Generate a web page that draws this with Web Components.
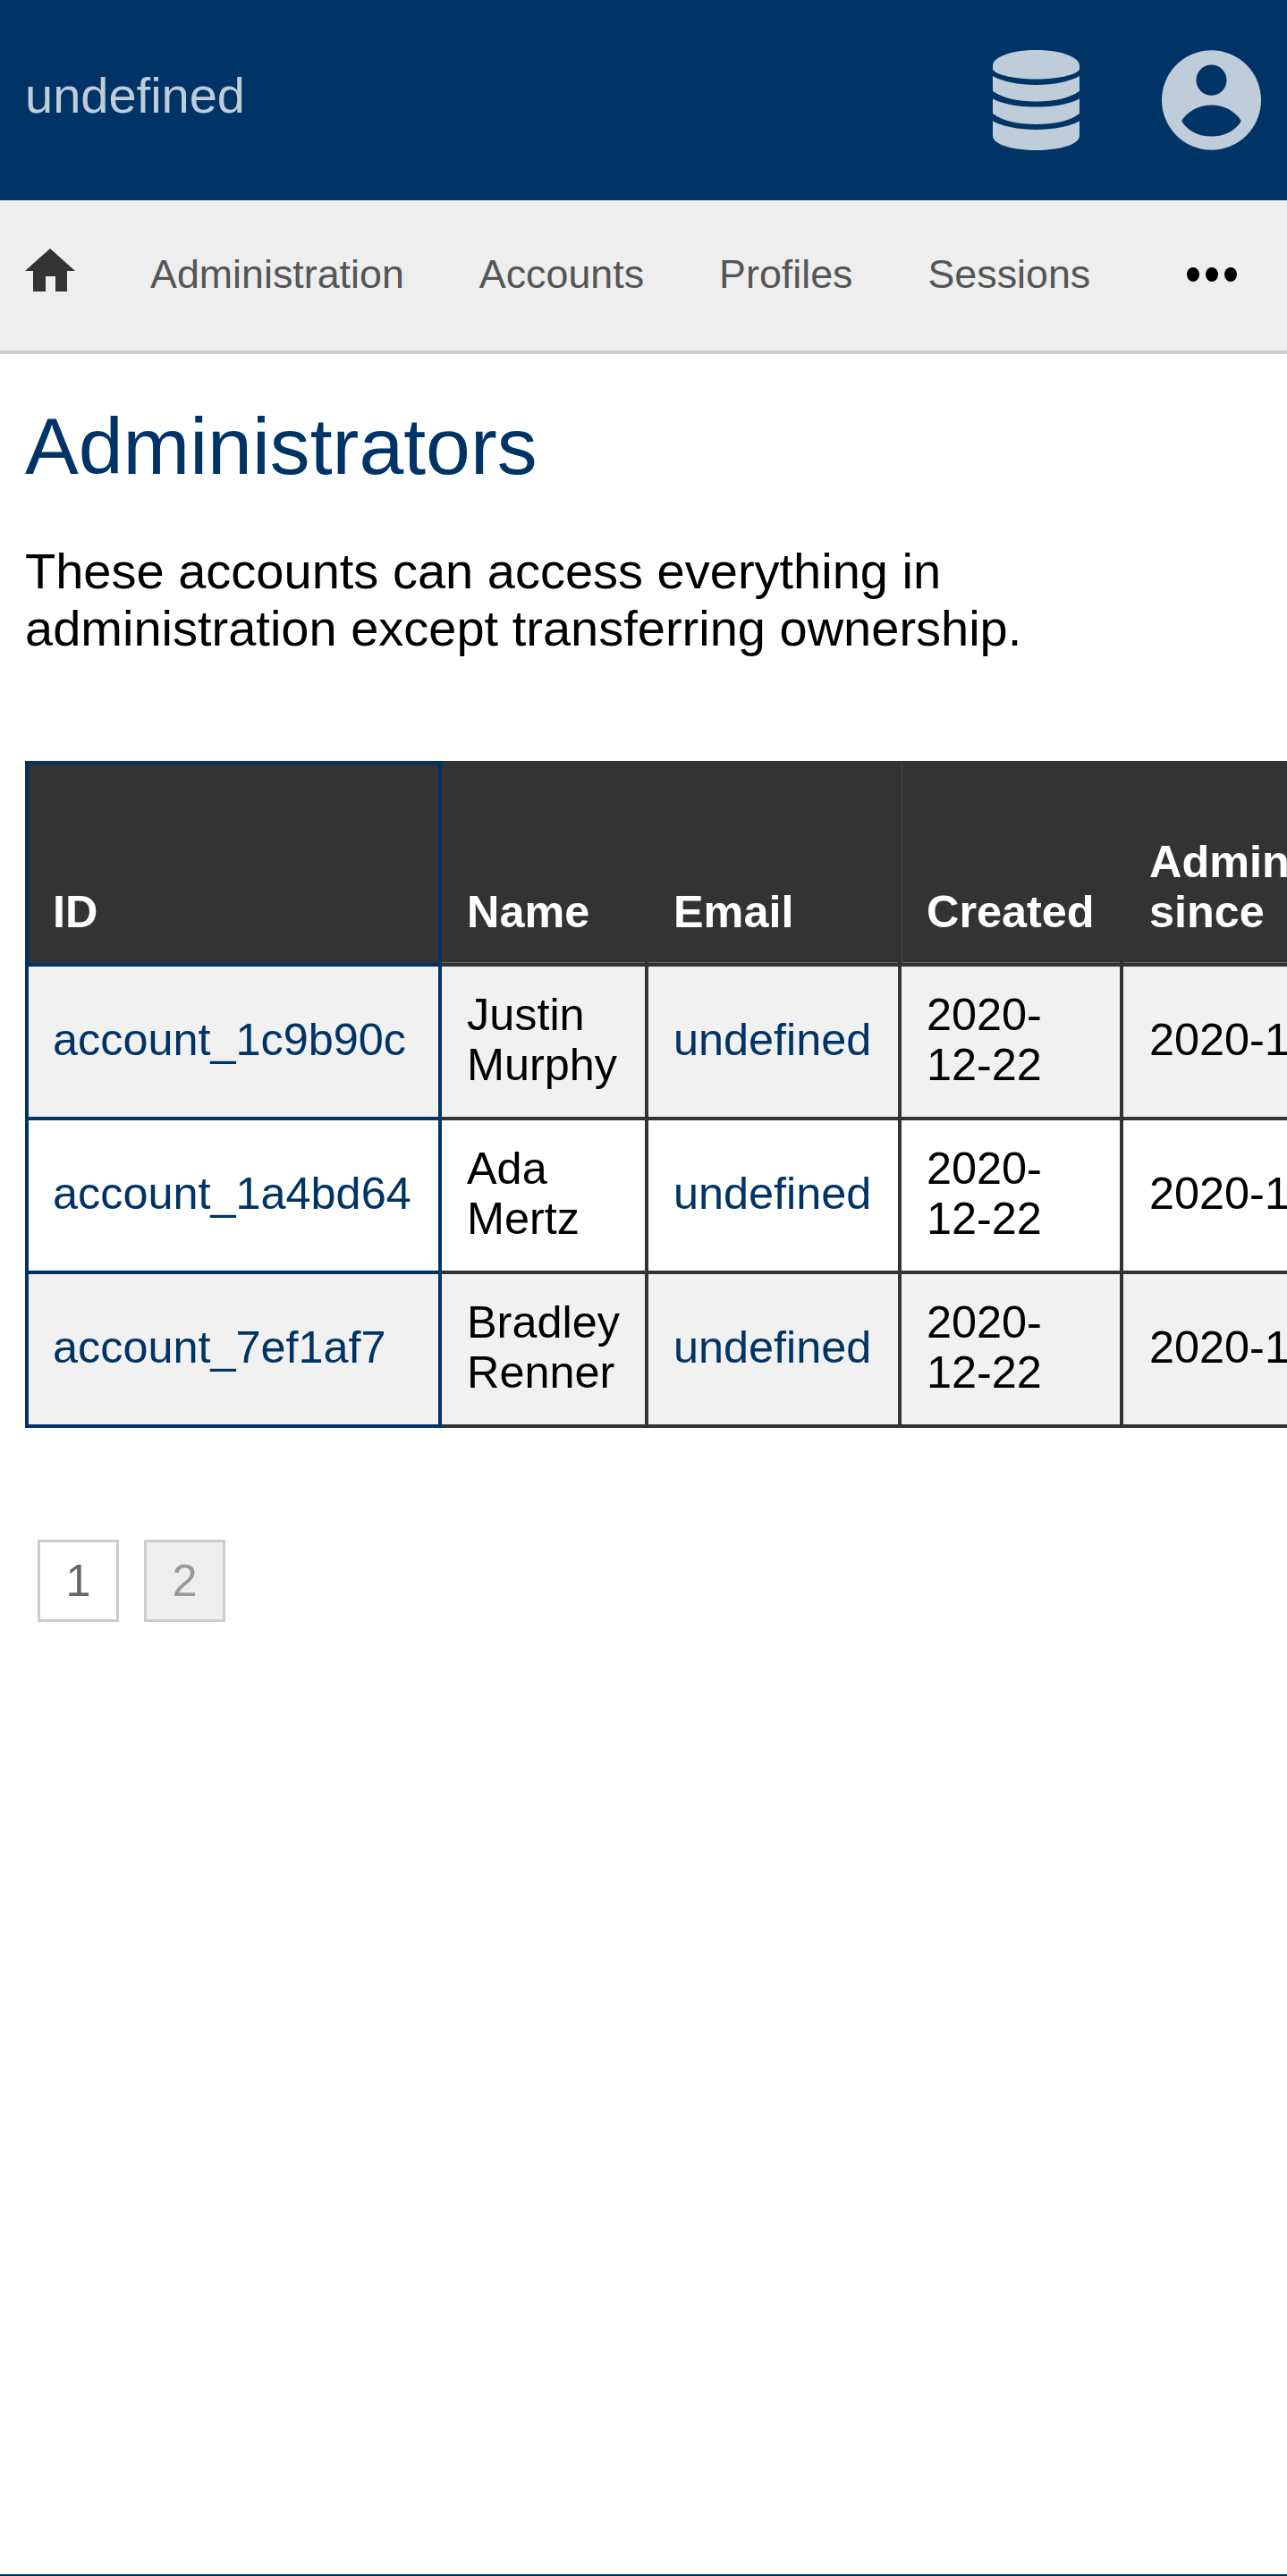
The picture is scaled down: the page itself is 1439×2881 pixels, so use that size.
<!DOCTYPE html>
<html>
<head>
<meta charset="utf-8">
<title>Administrators</title>
<style>
  html, body { margin: 0; padding: 0; }
  body { font-family: "Liberation Sans", Arial, sans-serif; color: #000; overflow-x: hidden; }
</style>
</head>
<body>
<admin-page>
  <site-header slot="header" title="undefined"></site-header>
  <site-nav slot="nav">
    <a href="#">Administration</a>
    <a href="#">Accounts</a>
    <a href="#">Profiles</a>
    <a href="#">Sessions</a>
  </site-nav>
  <page-intro heading="Administrators">These accounts can access everything in administration except transferring ownership.</page-intro>
  <admin-table></admin-table>
  <page-links pages="1,2" current="2"></page-links>
</admin-page>

<script>
(() => {
  class AdminPage extends HTMLElement {
    connectedCallback() {
      if (this.shadowRoot) return;
      this.attachShadow({ mode: "open" });
      this.shadowRoot.innerHTML = `
      <style>
        :host {
          display: flex;
          flex-direction: column;
          min-height: 2881px;
          box-sizing: border-box;
        }
        main { flex: 1; min-width: 0; }
        footer { height: 2px; background: #036; }
      </style>
      <slot name="header"></slot>
      <slot name="nav"></slot>
      <main><slot></slot></main>
      <footer></footer>
    `;
    }
  }

  class SiteHeader extends HTMLElement {
    connectedCallback() {
      if (this.shadowRoot) return;
      this.attachShadow({ mode: "open" });
      const title = this.getAttribute("title") || "";
      this.shadowRoot.innerHTML = `
      <style>
        :host {
          display: flex;
          align-items: center;
          height: 224px;
          padding: 0 29px 0 28px;
          box-sizing: border-box;
          background: #036;
          color: #bfccd9;
        }
        .title { flex: 1; font-size: 56px; line-height: 64px; margin-top: -10px; }
        .icons { display: flex; align-items: center; gap: 92px; }
        svg { display: block; fill: currentColor; }
      </style>
      <div class="title">${title}</div>
      <div class="icons">
        <svg width="97" height="112" viewBox="0 0 290 335" aria-hidden="true">
          <path d="M0 52C0 22 65 0 145 0S290 22 290 52V62C290 80 225 97 145 97S0 80 0 62Z"/>
          <path d="M0 87C30 105 85 117 145 117S260 105 290 87V137C260 160 210 172 145 172S30 160 0 137Z"/>
          <path d="M0 162C30 180 85 190 145 190S260 180 290 162V212C260 235 210 248 145 248S30 235 0 212Z"/>
          <path d="M0 237C30 255 85 266 145 266S260 255 290 237V287C290 315 225 335 145 335S0 315 0 287Z"/>
        </svg>
        <svg width="111" height="112" viewBox="0 0 333 335" aria-hidden="true">
          <path fill-rule="evenodd" d="M166.500 0A166.500 167.500 0 1 0 166.500 335A166.500 167.500 0 1 0 166.500 0ZM166.500 49A51 51.500 0 1 1 166.500 152A51 51.500 0 1 1 166.500 49ZM66.500 237C85 205 125 184 166.500 184S248 205 266.500 237C248 270 210 289 166.500 289S85 270 66.500 237Z"/>
        </svg>
      </div>
    `;
    }
  }

  class SiteNav extends HTMLElement {
    connectedCallback() {
      if (this.shadowRoot) return;
      this.attachShadow({ mode: "open" });
      this.shadowRoot.innerHTML = `
      <style>
        :host {
          display: flex;
          align-items: center;
          height: 172px;
          padding: 0 28px;
          box-sizing: border-box;
          background: #eee;
          border-bottom: 4px solid #ccc;
          font-size: 44.800px;
          color: #555;
        }
        .home { display: block; width: 56px; height: 48px; margin: 0 84px 12px 0; fill: #333; }
        .links { flex: 1; display: flex; gap: 84px; margin-top: -3px; }
        ::slotted(a) { color: #555; text-decoration: none; }
        .more { display: block; width: 56px; height: 16px; margin: 0 28px 3px 0; fill: #000; }
      </style>
      <svg class="home" viewBox="0 0 56 48" aria-hidden="true">
        <path d="M28 0L56 25H47V48H34V31H23V48H9V25H0Z"/>
      </svg>
      <div class="links"><slot></slot></div>
      <svg class="more" viewBox="0 0 56 16" aria-hidden="true">
        <ellipse cx="7" cy="8" rx="7" ry="8"/>
        <ellipse cx="28" cy="8" rx="7" ry="8"/>
        <ellipse cx="49" cy="8" rx="7" ry="8"/>
      </svg>
    `;
    }
  }

  class PageIntro extends HTMLElement {
    connectedCallback() {
      if (this.shadowRoot) return;
      this.attachShadow({ mode: "open" });
      const heading = this.getAttribute("heading") || "";
      this.shadowRoot.innerHTML = `
      <style>
        :host { display: block; padding: 0 28px; }
        h1 {
          margin: 0;
          padding-top: 52px;
          font-size: 89.600px;
          font-weight: 400;
          line-height: 103px;
          color: #036;
        }
        p {
          margin: 56px 0 0;
          max-width: 1200px;
          font-size: 56px;
          line-height: 64px;
        }
      </style>
      <h1>${heading}</h1>
      <p><slot></slot></p>
    `;
    }
  }

  class AdminTable extends HTMLElement {
    #rows = [
      ["account_1c9b90c", "Justin Murphy"],
      ["account_1a4bd64", "Ada Mertz"],
      ["account_7ef1af7", "Bradley Renner"],
    ];

    connectedCallback() {
      if (this.shadowRoot) return;
      this.attachShadow({ mode: "open" });
      const body = this.#rows.map(([id, name]) => `
        <tr>
          <td class="id"><a href="#">${id}</a></td>
          <td>${name}</td>
          <td><a href="#">undefined</a></td>
          <td>2020-12-22</td>
          <td class="since">2020-12-22</td>
        </tr>`).join("");

      this.shadowRoot.innerHTML = `
      <style>
        :host { display: block; padding: 0 0 0 28px; margin-top: 116px; overflow: hidden; }
        table {
          border-collapse: collapse;
          table-layout: fixed;
          width: 1544px;
          font-size: 50.400px;
          line-height: 56px;
        }
        th, td { padding: 26px 28px 30px; border: 4px solid #333; box-sizing: border-box; }
        th {
          height: 226px;
          padding: 28px 28px 29px;
          background: #333;
          color: #fff;
          font-weight: 700;
          text-align: left;
          vertical-align: bottom;
          box-shadow: inset 0 -1px #666;
        }
        th:nth-child(4) { box-shadow: inset 1px 0 #4a4a4a, inset 0 -1px #666; }
        th:nth-child(5), td.since { padding-left: 29px; }
        td { height: 172px; }
        tbody tr:nth-child(odd) td { background: #f1f1f1; }
        th.id, td.id { padding-left: 27px; border: 4px solid #036; box-shadow: none; }
        td.since { white-space: nowrap; }
        a { color: #036; text-decoration: none; }
      </style>
      <table>
        <colgroup>
          <col style="width:462px"><col style="width:231px"><col style="width:283px"><col style="width:248px"><col style="width:320px">
        </colgroup>
        <thead>
          <tr><th class="id">ID</th><th>Name</th><th>Email</th><th>Created</th><th>Admin since</th></tr>
        </thead>
        <tbody>${body}</tbody>
      </table>
    `;
    }
  }

  class PageLinks extends HTMLElement {
    connectedCallback() {
      if (this.shadowRoot) return;
      this.attachShadow({ mode: "open" });
      const current = this.getAttribute("current");
      const pages = (this.getAttribute("pages") || "").split(",");
      this.shadowRoot.innerHTML = `
      <style>
        :host { display: flex; gap: 28px; padding: 0 0 0 42px; margin-top: 125px; }
        a {
          width: 91px;
          height: 92px;
          padding-bottom: 2px;
          box-sizing: border-box;
          display: flex;
          align-items: center;
          justify-content: center;
          border: 3px solid #ccc;
          font-size: 50.400px;
          color: #666;
          text-decoration: none;
        }
        a.current { background: #eee; color: #999; }
      </style>
      ${pages.map((p) => `<a href="#" class="${p === current ? "current" : ""}">${p}</a>`).join("")}
    `;
    }
  }

  customElements.define("admin-page", AdminPage);
  customElements.define("site-header", SiteHeader);
  customElements.define("site-nav", SiteNav);
  customElements.define("page-intro", PageIntro);
  customElements.define("admin-table", AdminTable);
  customElements.define("page-links", PageLinks);
})();
</script>
</body>
</html>
